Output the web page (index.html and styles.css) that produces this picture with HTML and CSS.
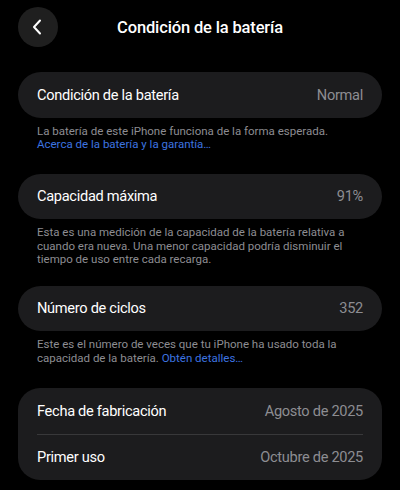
FILE: index.html
```html
<!DOCTYPE html>
<html lang="es">
<head>
<meta charset="utf-8">
<link rel="stylesheet" href="styles.css">
</head>
<body>
<div class="screen">
  <header class="nav">
    <button class="back" aria-label="Atrás">
      <svg width="10" height="16" viewBox="0 0 10 16"><path d="M8 1.5 L2 8 L8 14.5" fill="none" stroke="#fff" stroke-width="2" stroke-linecap="round" stroke-linejoin="round"/></svg>
    </button>
    <h1 class="title">Condición de la batería</h1>
    <span></span>
  </header>

  <section class="group">
    <div class="card pill">
      <div class="row"><span class="label">Condición de la batería</span><span class="value">Normal</span></div>
    </div>
    <p class="note"><span class="line">La batería de este iPhone funciona de la forma esperada.</span><a class="link line">Acerca de la batería y la garantía…</a></p>
  </section>

  <section class="group g2">
    <div class="card pill">
      <div class="row"><span class="label">Capacidad máxima</span><span class="value">91%</span></div>
    </div>
    <p class="note">Esta es una medición de la capacidad de la batería relativa a cuando era nueva. Una menor capacidad podría disminuir el tiempo de uso entre cada recarga.</p>
  </section>

  <section class="group g3">
    <div class="card pill">
      <div class="row"><span class="label">Número de ciclos</span><span class="value">352</span></div>
    </div>
    <p class="note"><span class="line">Este es el número de veces que tu iPhone ha usado toda la</span><span class="line">capacidad de la batería. <a class="link">Obtén detalles…</a></span></p>
  </section>

  <section class="group g4">
    <div class="card rounded">
      <div class="row"><span class="label">Fecha de fabricación</span><span class="value">Agosto de 2025</span></div>
      <div class="sep"></div>
      <div class="row"><span class="label">Primer uso</span><span class="value">Octubre de 2025</span></div>
    </div>
  </section>
</div>
</body>
</html>
```

FILE: styles.css
```css
* { box-sizing: border-box; }
html, body {
  margin: 0;
  background: #000;
}
body {
  font-family: Roboto, Inter, "Liberation Sans", sans-serif;
  color: #fff;
  width: 400px;
  height: 490px;
  overflow: hidden;
}
.screen {
  padding: 7px 18px 0;
}
.nav {
  display: grid;
  grid-template-columns: 40px 1fr 40px;
  align-items: center;
  height: 40px;
}
.back {
  width: 40px;
  height: 40px;
  border-radius: 50%;
  border: none;
  background: #1f1f1f;
  display: flex;
  align-items: center;
  justify-content: center;
  padding: 0 3px 0 0;
}
.title {
  margin: 0;
  text-align: center;
  font-size: 16.5px;
  font-weight: 500;
  letter-spacing: -0.15px;
}
.group {
  margin-top: 25px;
}
.g2 { margin-top: 22px; }
.g3 { margin-top: 19px; }
.g4 { margin-top: 23px; }
.card {
  background: #1c1c1e;
}
.pill { border-radius: 23px; }
.rounded { border-radius: 22px; }
.row {
  height: 45.5px;
  display: flex;
  align-items: center;
  justify-content: space-between;
  padding: 0 19px;
  font-size: 14.6px;
  letter-spacing: -0.3px;
}
.label { color: #fff; }
.value { color: #8d8d92; }
.sep {
  height: 1px;
  margin: 0 19px;
  background: #38383a;
}
.note {
  margin: 7px 0 0;
  padding: 0 19px;
  font-size: 11.5px;
  line-height: 13.5px;
  color: #8d8d92;
}
.line {
  display: block;
}
.link {
  color: #3d74e0;
}
```
